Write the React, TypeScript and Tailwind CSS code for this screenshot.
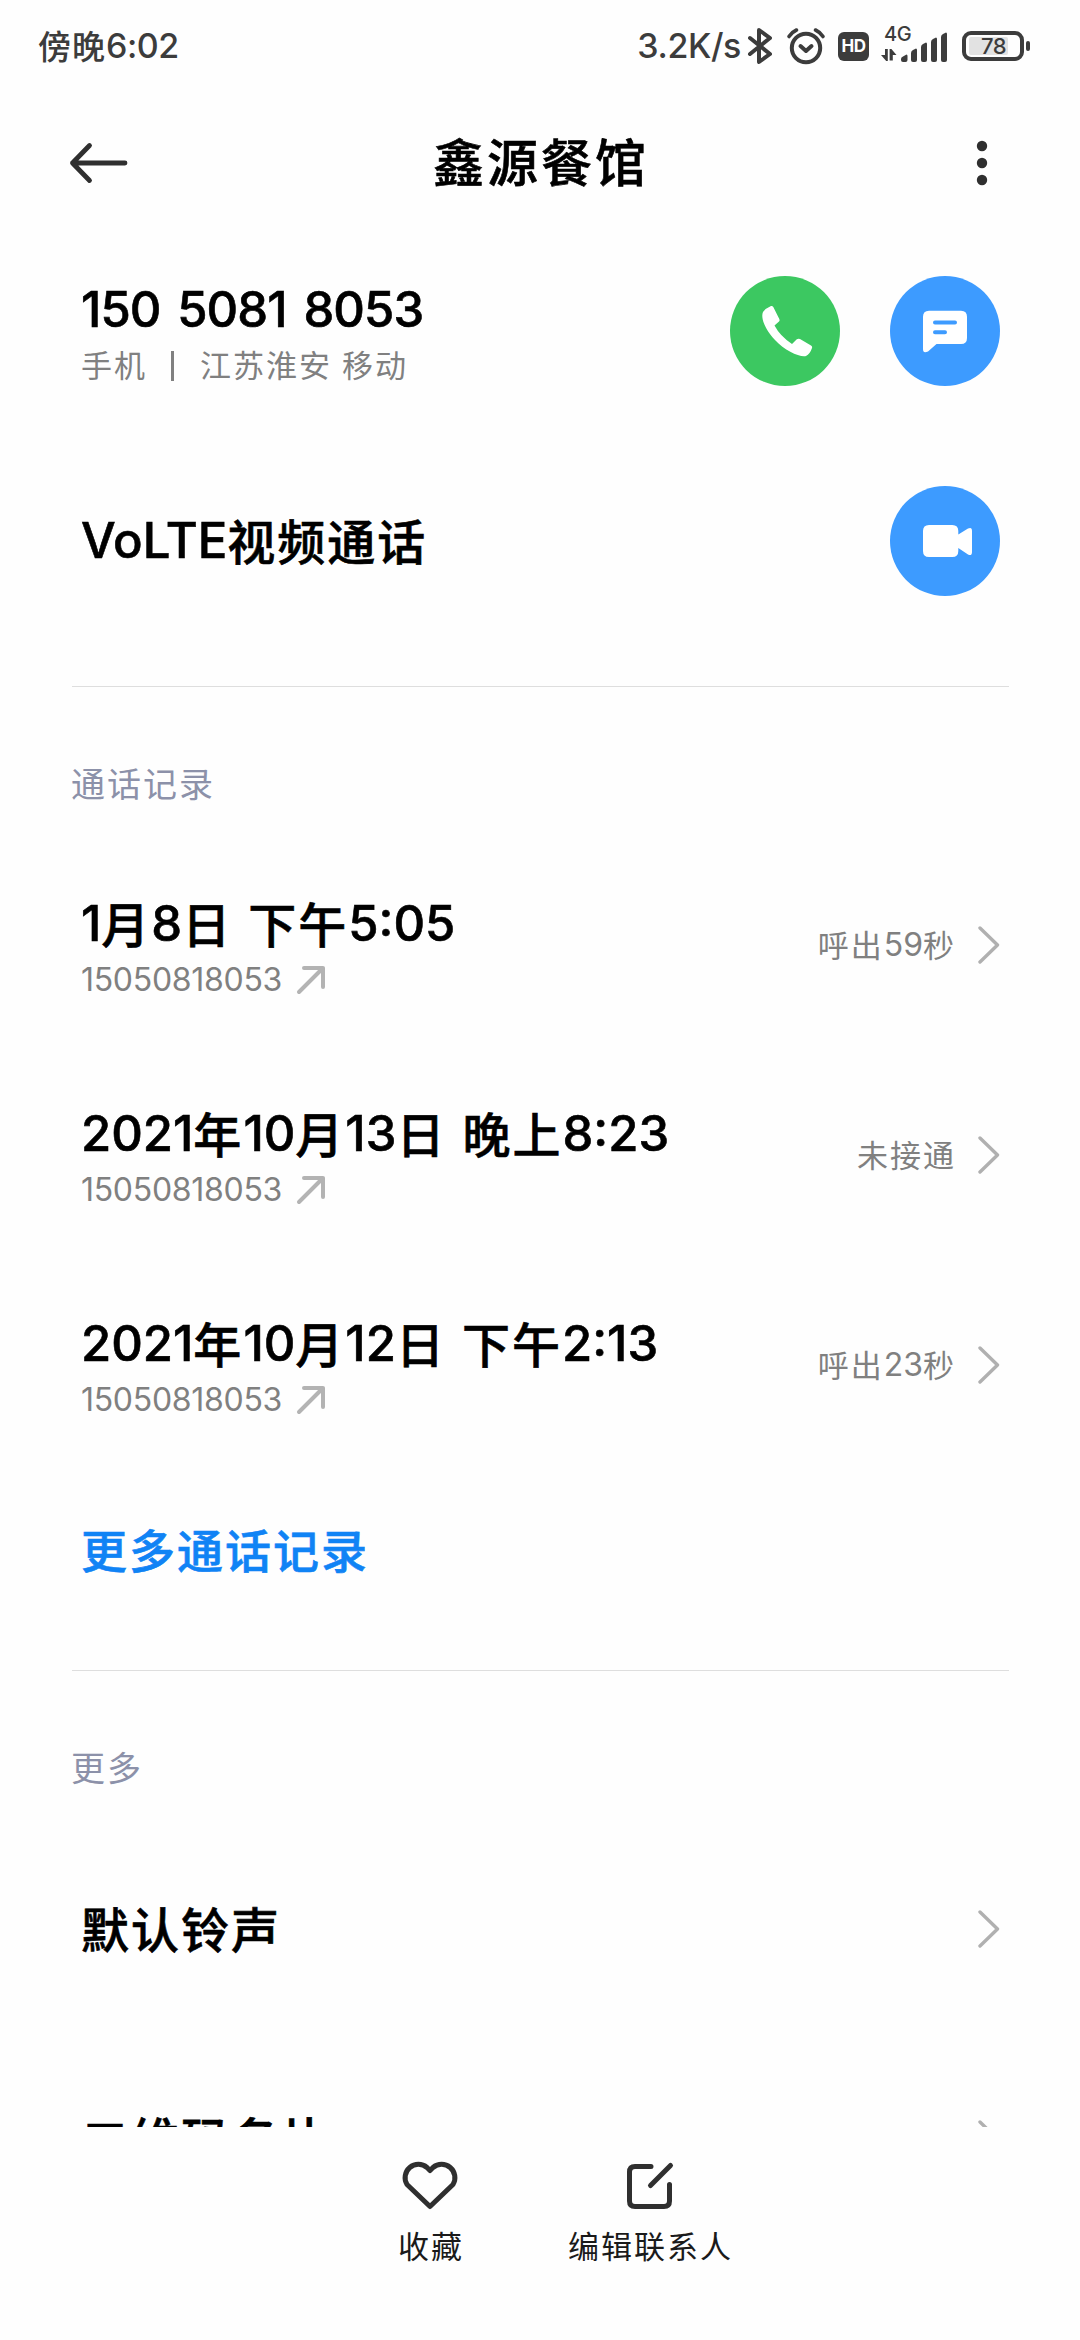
import React from "react";

/** Renders a string in Latin / CJK runs so each script gets its own tracking and baseline. */
function Mixed({ text, latin = "", cjk = "" }: { text: string; latin?: string; cjk?: string }) {
  const runs = text.match(/[\u3400-\u9fff]+|[^\u3400-\u9fff]+/g) ?? [];
  return (
    <>
      {runs.map((run, i) => (
        <span key={i} className={/[\u3400-\u9fff]/.test(run) ? cjk : latin}>
          {run}
        </span>
      ))}
    </>
  );
}

function StatusBar() {
  return (
    <div className="flex h-[92px] items-center justify-between pr-[50px] pl-[38px] text-[#3c3c3c]">
      <div className="h-[40px] text-[34px] leading-[40px] font-medium whitespace-pre">
        <Mixed text="傍晚6:02" cjk="tracking-[1px] text-[33px] align-[-1px]" latin="tracking-[-0.5px]" />
      </div>
      <div className="flex items-center">
        <div className="mr-[6px] h-[40px] text-[34px] leading-[40px] font-medium tracking-[-0.4px]">3.2K/s</div>
        <svg className="mr-[13px]" width="26" height="40" viewBox="0 0 26 40" fill="none" stroke="currentColor" strokeWidth="4" strokeLinecap="round" strokeLinejoin="round">
          <path d="M3 12 L23 28 L12 36 V4 L23 12 L3 28" />
        </svg>
        <svg className="mr-[12px]" width="40" height="40" viewBox="0 0 40 40" fill="none" stroke="currentColor" strokeWidth="4" strokeLinecap="round" strokeLinejoin="round">
          <circle cx="20" cy="22" r="14.2" />
          <path d="M14.5 20 L20 25 L25.5 20" />
          <path d="M3 10.5 Q6 6 10.5 4 M37 10.5 Q34 6 29.5 4" strokeWidth="3.6" />
        </svg>
        <div className="mr-[12px] flex h-[29px] w-[31px] items-center justify-center rounded-[6px] bg-[#3c3c3c] text-[17px] leading-none font-bold tracking-[-0.5px] text-white">
          HD
        </div>
        <div className="mr-[14px] flex h-[40px] w-[67px]">
          <div className="flex w-[20px] flex-col pl-[3px]">
            <span className="h-[20px] w-[30px] text-[20px] leading-[17px] font-medium tracking-[-0.5px]">4G</span>
            <svg className="-ml-[3px]" width="18" height="16" viewBox="0 0 18 16" fill="currentColor">
              <path d="M4 3 h2.8 v12 h-1.6 L0 9 h4z M8.600 14.500 V3 h1.800 L15.500 9 h-3.700 v5.500z" />
            </svg>
          </div>
          <svg width="47" height="40" viewBox="0 0 47 40" fill="currentColor">
            <path d="M0 33 Q0 31 2 30.400 L5.500 28.500 Q6.500 28.500 6.500 30 V34 Q6.500 36 4.500 36 H2 Q0 36 0 34z" />
            <path d="M10 27 Q10 25 12 24 L15 22.500 Q16 22.500 16 24 V34 Q16 36 14 36 H12 Q10 36 10 34z" />
            <path d="M20 21 Q20 19 22 18 L25 16.500 Q26 16.500 26 18 V34 Q26 36 24 36 H22 Q20 36 20 34z" />
            <path d="M30 16 Q30 14 32 13 L35 11.500 Q36 11.500 36 13 V34 Q36 36 34 36 H32 Q30 36 30 34z" />
            <path d="M40 11 Q40 9 42 8 L45 6.500 Q46 6.500 46 8 V34 Q46 36 44 36 H42 Q40 36 40 34z" />
          </svg>
        </div>
        <div className="flex items-center gap-[2px]">
          <div className="flex h-[30px] w-[62px] items-center rounded-[9px] border-4 border-[#3c3c3c] p-[3px]">
            <div className="flex h-[18px] w-[39px] items-center rounded-[2px] bg-[#e2e2e2] pl-[12px] text-[22px] font-medium tracking-[-0.5px]">78</div>
          </div>
          <div className="h-[10px] w-[4px] rounded-full bg-[#3c3c3c]" />
        </div>
      </div>
    </div>
  );
}

function Header() {
  return (
    <div className="flex h-[134px] items-center justify-between pt-[7px] pr-[92px] pl-[68px]">
      <svg width="62" height="44" viewBox="0 0 62 44" fill="none" stroke="#2f2f2f" strokeWidth="4.8" strokeLinecap="round" strokeLinejoin="round">
        <path d="M57 22 H4.500 M21.500 4.500 L4.500 22 L21.500 39.500" />
      </svg>
      <h1 className="h-[64px] text-[51px] leading-[66px] font-medium tracking-[3px] [-webkit-text-stroke:0.6px_currentColor]">鑫源餐馆</h1>
      <svg width="50" height="50" viewBox="0 0 50 50" fill="#2f2f2f" className="-mr-[14px]">
        <circle cx="30" cy="8" r="5.200" />
        <circle cx="30" cy="25" r="5.200" />
        <circle cx="30" cy="42" r="5.200" />
      </svg>
    </div>
  );
}

function RoundButton({ color, children }: { color: string; children: React.ReactNode }) {
  return (
    <button className={`h-[110px] w-[110px] rounded-full ${color}`}>
      <svg width="110" height="110" viewBox="0 0 110 110">
        {children}
      </svg>
    </button>
  );
}

function Chevron() {
  return (
    <svg width="22" height="38" viewBox="0 0 22 38" fill="none" stroke="#b0b0b0" strokeWidth="3.4" strokeLinecap="round" strokeLinejoin="round">
      <path d="M2 2 L19.500 19 L2 36" />
    </svg>
  );
}

function Divider() {
  return <div className="mt-10 mr-[71px] ml-[72px] h-px bg-[#dedede]" />;
}

function SectionLabel({ children }: { children: string }) {
  return (
    <div className="flex h-[153px] items-center pt-[43px] pl-[71px] text-[34px] leading-[44px] tracking-[2px] text-[#8c91a9]">
      {children}
    </div>
  );
}

const calls = [
  { time: "1月8日 下午5:05", status: "呼出59秒" },
  { time: "2021年10月13日 晚上8:23", status: "未接通" },
  { time: "2021年10月12日 下午2:13", status: "呼出23秒" },
];

const titleText =
  "h-[60px] text-[49px] leading-[60px] font-medium whitespace-pre [-webkit-text-stroke:0.6px_currentColor]";

function CallRow({ time, status }: { time: string; status: string }) {
  return (
    <div className="flex h-[210px] items-center justify-between pr-[80px] pl-[81px]">
      <div className="pt-[3px]">
        <div className={titleText}>
          <Mixed text={time} cjk="tracking-[2px] text-[48px] align-[-2px]" latin="[word-spacing:3px]" />
        </div>
        <div className="mt-[6px] flex h-[40px] items-center text-[32px] leading-[40px] tracking-[-0.3px] text-[#808080]">
          <span>15050818053</span>
          <svg className="ml-[14px]" width="30" height="30" viewBox="0 0 30 30" fill="none" stroke="#b3b3b3" strokeWidth="4" strokeLinecap="round" strokeLinejoin="round">
            <path d="M3 27 L27 3 M8 3 H27 V22" />
          </svg>
        </div>
      </div>
      <div className="flex items-center gap-[22px] text-[32px] leading-[40px] text-[#808080]">
        <span className="h-[40px]">
          <Mixed text={status} cjk="tracking-[2px] text-[31px] align-[-1px]" />
        </span>
        <Chevron />
      </div>
    </div>
  );
}

function SettingRow({ children }: { children: string }) {
  return (
    <div className="flex h-[210px] items-center justify-between pr-[80px] pl-[81px]">
      <span className="h-[60px] text-[48px] leading-[64px] font-medium tracking-[2px] [-webkit-text-stroke:0.6px_currentColor]">{children}</span>
      <Chevron />
    </div>
  );
}

export default function App() {
  return (
    <div className="flex h-[2340px] w-[1080px] flex-col overflow-hidden bg-[#fefefe] font-['Inter','Noto_Sans_CJK_SC',sans-serif] text-black">
      <StatusBar />
      <Header />
      <main className="h-[1901px] overflow-hidden">
        <div className="flex h-[210px] items-center justify-between pr-[80px] pl-[81px]">
          <div className="pt-[9px]">
            <div className={titleText}>
              <span className="tracking-[-0.9px] [word-spacing:4.5px]">150 5081 8053</span>
            </div>
            <div className="flex h-[52px] items-center text-[31px] leading-[52px] tracking-[2px] text-[#808080]">
              <span>手机</span>
              <span className="mr-[26px] ml-[24px] h-[30px] w-[3px] bg-[#808080]" />
              <span className="mr-[10px]">江苏淮安</span>
              <span>移动</span>
            </div>
          </div>
          <div className="flex gap-[50px]">
            <RoundButton color="bg-[#3cc861]">
              <path fill="#fff" d="M33 36 Q36 32 41 30 Q42.500 29.700 43.300 31 L49.300 43 Q50 44.700 49 45.500 L44.500 49.500 Q50 60 62 68 L66.500 63.500 Q68 62.300 70 63 L81 69.500 Q82.500 70.500 82 72 Q80 78 76 80 C70 81.500 55 75 45 64 C37 56 30 43 33 36Z" />
            </RoundButton>
            <RoundButton color="bg-[#3d9bff]">
              <path fill="#fff" d="M39 34.700 H71 Q77 34.700 77 40.700 V62 Q77 68 71 68 H46.500 L38 75.500 Q33 78 33 73 V40.700 Q33 34.700 39 34.700Z" />
              <path stroke="#3d9bff" strokeWidth="4" strokeLinecap="round" d="M45 46.400 H65 M45 56.200 H55" />
            </RoundButton>
          </div>
        </div>
        <div className="flex h-[210px] items-center justify-between pr-[80px] pl-[81px]">
          <div className={titleText}>
            <Mixed text="VoLTE视频通话" cjk="tracking-[2px] text-[48px] align-[-2px]" latin="" />
          </div>
          <RoundButton color="bg-[#3d9bff]">
            <path fill="#fff" d="M39 39 H62.300 Q68.300 39 68.300 45 V48.500 L78 42.500 Q82 40.500 82 45 V66 Q82 70.500 78 68.500 L68.300 62 V65 Q68.300 71 62.300 71 H39 Q33 71 33 65 V45 Q33 39 39 39Z" />
          </RoundButton>
        </div>
        <Divider />
        <SectionLabel>通话记录</SectionLabel>
        {calls.map((call) => (
          <CallRow key={call.time} {...call} />
        ))}
        <div className="flex h-[160px] items-center pt-[2px] pl-[81px] text-[46px] leading-[60px] font-medium tracking-[2px] text-[#1083f5] [-webkit-text-stroke:0.6px_currentColor]">
          更多通话记录
        </div>
        <Divider />
        <SectionLabel>更多</SectionLabel>
        <SettingRow>默认铃声</SettingRow>
        <SettingRow>二维码名片</SettingRow>
      </main>
      <nav className="flex flex-1 justify-center pt-[33px] pl-[49px] text-[31px] leading-[40px] tracking-[2px] text-[#1a1a1a]">
        <button className="mr-[106px] flex flex-col items-center">
          <svg width="60" height="52" viewBox="0 0 60 52" fill="none" stroke="#2f2f2f" strokeWidth="5" strokeLinejoin="round">
            <path d="M30 46.500 L7 24.500 A13.300 13.300 0 0 1 27 7.500 L30 10.500 L33 7.500 A13.300 13.300 0 0 1 53 24.500 Z" />
          </svg>
          <span className="mt-[15px] -mr-[2px]">收藏</span>
        </button>
        <button className="flex flex-col items-center">
          <svg width="52" height="52" viewBox="0 0 52 52" fill="none" stroke="#2f2f2f" strokeWidth="5" strokeLinecap="round" strokeLinejoin="round">
            <path d="M27 6.500 H11 Q5.500 6.500 5.500 12 V41 Q5.500 46.500 11 46.500 H40 Q45.500 46.500 45.500 41 V24.500 M26.500 25.500 L46.500 5.500" />
          </svg>
          <span className="mt-[15px] -mr-[2px]">编辑联系人</span>
        </button>
      </nav>
    </div>
  );
}
